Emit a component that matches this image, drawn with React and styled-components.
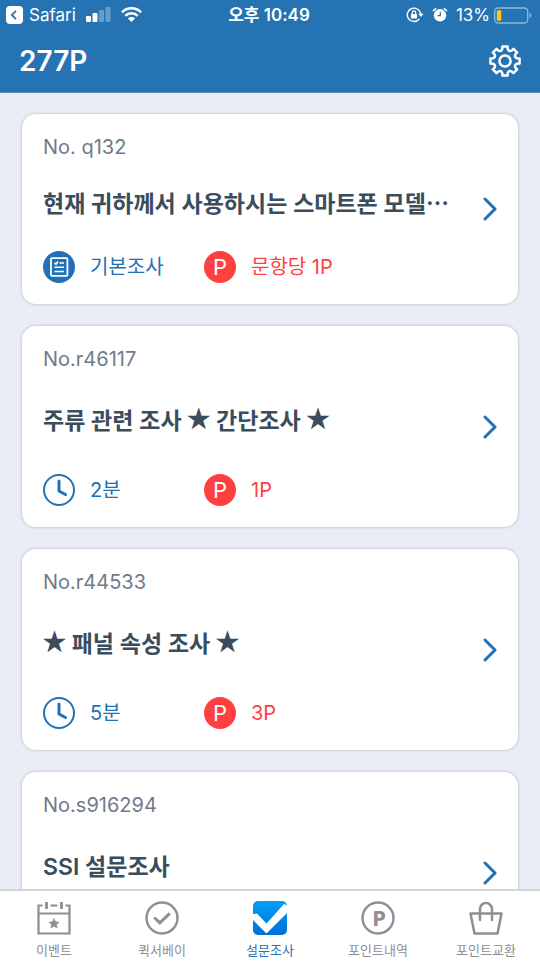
import React from 'react'
import styled, { createGlobalStyle } from 'styled-components'

const GlobalStyle = createGlobalStyle`
*{
  box-sizing:border-box;
}
body{
  margin:0;
  background-color:#e9edf5;
  font-family:Inter, "Noto Sans CJK KR", sans-serif;
}
a{
  color:inherit;
  text-decoration:none;
}
svg{
  display:block;
  flex:none;
}
`
const StylePage = styled.div`
  display:flex;
  flex-direction:column;
  height:100vh;
  overflow:hidden;
`
const StyleHeader = styled.header`
  flex:none;
  background-color:#2673b4;
  border-bottom:1px solid #5d88b0;
  color:#fff;
`
const StyleStatus = styled.div`
  display:grid;
  grid-template-columns:1fr auto 1fr;
  align-items:center;
  height:30px;
  padding:0 8px 0 6px;
  font-size:17px;
  line-height:20px;
`
const StyleStatusSide = styled.div`
  display:flex;
  align-items:center;
  justify-content:${props => props.$end ? 'flex-end' : 'flex-start'};
  gap:${props => props.$end ? '8px' : '10px'};
`
const StyleBack = styled.a`
  display:flex;
  align-items:center;
  gap:6px;
`
const StyleBattery = styled.div`
  display:flex;
  align-items:center;
  gap:4px;
`
const StyleTime = styled.time`
  font-weight:600;
`
const StyleBar = styled.div`
  display:flex;
  align-items:center;
  justify-content:space-between;
  height:62px;
  padding:0 19px;
`
const StylePoint = styled.h1`
  margin:0;
  font-size:28px;
  line-height:32px;
  font-weight:600;
`
const StyleSetting = styled.button`
  padding:0;
  border:0;
  background:none;
  color:#fff;
`
const StyleList = styled.main`
  flex:1;
  min-height:0;
  overflow:hidden;
  display:flex;
  flex-direction:column;
  gap:22px;
  padding:21px 22px 0;
`
const StyleCard = styled.a`
  flex:none;
  display:flex;
  align-items:center;
  justify-content:space-between;
  padding:21px;
  border-radius:14px;
  background-color:#fff;
  box-shadow:0 0 3px rgba(60, 65, 80, 0.35);
`
const StyleNo = styled.div`
  font-size:20px;
  line-height:24px;
  color:#6f7b89;
`
const StyleTitle = styled.h2`
  margin:${props => props.$compact ? '29px 0 31px' : '34px 0 37px'};
  height:32px;
  font-size:23px;
  line-height:32px;
  font-weight:600;
  color:#3b4c5c;
  white-space:nowrap;
`
const StyleMore = styled.span`
  font-family:"Noto Sans CJK KR", sans-serif;
  line-height:1;
`
const StyleStar = styled.span`
  margin:0 -2px;
  font-family:"DejaVu Sans", sans-serif;
  font-size:30px;
  line-height:0;
  font-weight:400;
`
const StyleMeta = styled.div`
  display:grid;
  grid-template-columns:161px auto;
  min-height:32px;
`
const StyleMetaItem = styled.div`
  display:flex;
  align-items:center;
  gap:15px;
  font-size:20px;
  line-height:32px;
  color:${props => props.$red ? '#ff4040' : '#2270b5'};
`
const StylePBadge = styled.span`
  width:32px;
  height:32px;
  border-radius:50%;
  background-color:#ff4040;
  color:#fff;
  font-size:22px;
  text-align:center;
`
const StyleTabs = styled.nav`
  flex:none;
  display:grid;
  grid-template-columns:repeat(5, 1fr);
  height:72px;
  border-top:2px solid #d5d6d9;
  background-color:#fff;
`
const StyleTab = styled.a`
  display:flex;
  flex-direction:column;
  align-items:center;
  gap:5px;
  padding-top:10px;
  font-size:13px;
  line-height:20px;
  color:${props => props.$active ? '#2673b4' : '#8e8e93'};
`

const BackIcon = () => (
  <svg width="17" height="18" viewBox="0 0 17 18">
    <rect width="17" height="18" rx="4" fill="#fff" />
    <path d="M10 4.800 5.800 9l4.200 4.200" fill="none" stroke="#2673b4" strokeWidth="1.800" />
  </svg>
)
const SignalIcon = () => (
  <svg width="25" height="16" viewBox="0 0 25 16" fill="#fff">
    <rect x="0" y="9" width="5" height="6" rx="1" />
    <rect x="6.500" y="6" width="5" height="9" rx="1" />
    <g opacity=".3">
      <rect x="13" y="3" width="5" height="12" rx="1" />
      <rect x="19.500" y="0" width="5" height="15" rx="1" />
    </g>
  </svg>
)
const WifiIcon = () => (
  <svg width="21" height="16" viewBox="0 0 21 16">
    <g fill="none" stroke="#fff" strokeWidth="2.600">
      <path d="M1 5.300a13.300 13.300 0 0 1 19 0" />
      <path d="M4.300 8.900a8.700 8.700 0 0 1 12.400 0" />
    </g>
    <path d="M6.900 11.400a5.100 5.100 0 0 1 7.200 0L10.500 15z" fill="#fff" />
  </svg>
)
const LockIcon = () => (
  <svg width="18" height="16" viewBox="0 0 18 16">
    <path d="M13.400 11.800A6.700 6.700 0 1 1 14.700 7.500" fill="none" stroke="#fff" strokeWidth="1.400" />
    <path d="M12.300 6.800h5.200l-2.600 3.300z" fill="#fff" />
    <rect x="5" y="7" width="6" height="4.500" rx=".6" fill="#fff" />
    <path d="M6.300 7.200V5.600a1.700 1.700 0 0 1 3.400 0v1.600" fill="none" stroke="#fff" strokeWidth="1.200" />
  </svg>
)
const AlarmIcon = () => (
  <svg width="16" height="16" viewBox="0 0 16 16">
    <circle cx="8" cy="8.300" r="6.200" fill="#fff" />
    <path d="M1.400 3.600 3.700 1.700M14.600 3.600l-2.300-1.900" stroke="#fff" strokeWidth="1.500" strokeLinecap="round" />
    <path d="M8.300 4.800v3.900H5.500" fill="none" stroke="#2673b4" strokeWidth="1.200" />
  </svg>
)
const BatteryIcon = () => (
  <svg width="38" height="17" viewBox="0 0 38 17">
    <rect x=".7" y="1" width="33" height="15" rx="3.500" fill="none" stroke="#8fb8dc" strokeWidth="1.300" />
    <path d="M35.500 6v5q2-.6 2-2.500t-2-2.500z" fill="#8fb8dc" />
    <rect x="2.800" y="3.200" width="4.500" height="10.600" rx="1" fill="#fccb0a" />
  </svg>
)

// 톱니 8개
const gearPath = () => {
  const point = (deg, r) => {
    const rad = deg * Math.PI / 180
    return `${(16 + r * Math.cos(rad)).toFixed(2)} ${(16 + r * Math.sin(rad)).toFixed(2)}`
  }
  let d = ''
  for (let i = 0; i < 8; i++) {
    const a = i * 45 - 90
    d += `${i ? 'L' : 'M'}${point(a - 10, 14.8)}L${point(a + 10, 14.8)}L${point(a + 13, 12.2)}`
    d += `Q${point(a + 22.5, 10)} ${point(a + 32, 12.2)}`
  }
  return d + 'Z'
}
const GearIcon = () => (
  <svg width="32" height="32" viewBox="0 0 32 32" fill="none" stroke="currentColor" strokeWidth="2.500" strokeLinejoin="round">
    <path d={gearPath()} />
    <circle cx="16" cy="16" r="5.600" />
  </svg>
)
const ChevronIcon = () => (
  <svg width="14" height="24" viewBox="0 0 14 24">
    <path d="M2 2 12 12 2 22" fill="none" stroke="#2270b5" strokeWidth="3" strokeLinecap="round" strokeLinejoin="round" />
  </svg>
)
const ClockIcon = () => (
  <svg width="32" height="32" viewBox="0 0 32 32" fill="none" stroke="#2270b5">
    <circle cx="16" cy="16" r="15" strokeWidth="2" />
    <path d="M16 7v10l6.500 3.500" strokeWidth="3" strokeLinecap="round" strokeLinejoin="round" />
  </svg>
)
const SheetIcon = () => (
  <svg width="32" height="32" viewBox="0 0 32 32" fill="none" stroke="#fff">
    <circle cx="16" cy="16" r="16" fill="#2270b5" stroke="none" />
    <rect x="8" y="7.200" width="16.400" height="17.600" rx="1" strokeWidth="1.800" />
    <path d="M11.500 11.700l1.500 1.500 2-2.700M16.500 12h4.500M11.500 16.300h9.500M11.500 20.500h9.500" strokeWidth="1.600" />
  </svg>
)
const EventIcon = () => (
  <svg width="34" height="34" viewBox="0 0 34 34" fill="none" stroke="#8e8e93" strokeWidth="2.200">
    <path d="M5.500 4.500H1.500v28h31v-28h-4M1.500 12.500h31M13.500 4.500h7" />
    <path d="M9.500 1v7M24.500 1v7" strokeWidth="2.800" />
    <path d="m17 16.800 1.700 3.700 4 .4-3 2.700.9 4-3.600-2.100-3.600 2.100.9-4-3-2.700 4-.4z" fill="#8e8e93" stroke="none" />
  </svg>
)
const QuickIcon = () => (
  <svg width="34" height="34" viewBox="0 0 34 34" fill="none" stroke="#8e8e93">
    <circle cx="17" cy="17" r="15.500" strokeWidth="2.400" />
    <path d="m9.300 16.500 5.500 5.300 10-9.500" strokeWidth="3" />
  </svg>
)
const SurveyIcon = () => (
  <svg width="34" height="34" viewBox="0 0 34 34">
    <defs>
      <linearGradient id="survey" x1="0" y1="0" x2="0" y2="1">
        <stop offset="0" stopColor="#00a0f8" />
        <stop offset="1" stopColor="#006fd6" />
      </linearGradient>
    </defs>
    <rect width="34" height="34" rx="5" fill="url(#survey)" />
    <path d="M0 13 4 12.500 13.500 22.500 31 3 34 4.500V12L13.500 32.500 0 19z" fill="#fff" />
  </svg>
)
const PointIcon = () => (
  <svg width="34" height="34" viewBox="0 0 34 34">
    <circle cx="17" cy="17" r="15.500" fill="none" stroke="#8e8e93" strokeWidth="2.400" />
    <text x="18" y="25" textAnchor="middle" fontFamily="Noto Sans, sans-serif" fontSize="22" fontWeight="700" fill="#8e8e93">P</text>
  </svg>
)
const BagIcon = () => (
  <svg width="34" height="34" viewBox="0 0 34 34" fill="none" stroke="#8e8e93" strokeWidth="2.500" strokeLinejoin="round">
    <path d="M1.500 12.500h31L28.500 32.500h-23z" />
    <path d="M11 19V8a6 6 0 0 1 12 0v11" strokeLinecap="round" />
  </svg>
)

const surveys = [
  { no: 'No. q132', title: '현재 귀하께서 사용하시는 스마트폰 모델…', basic: true, type: '기본조사', point: '문항당 1P' },
  { no: 'No.r46117', title: '주류 관련 조사 ★ 간단조사 ★', type: '2분', point: '1P' },
  { no: 'No.r44533', title: '★ 패널 속성 조사 ★', type: '5분', point: '3P' },
  { no: 'No.s916294', title: 'SSI 설문조사' },
]

const tabs = [
  { name: '이벤트', icon: <EventIcon /> },
  { name: '퀵서베이', icon: <QuickIcon /> },
  { name: '설문조사', icon: <SurveyIcon />, active: true },
  { name: '포인트내역', icon: <PointIcon /> },
  { name: '포인트교환', icon: <BagIcon /> },
]

// ★ 와 … 는 다른 글꼴로 표시
const renderTitle = title => title.split(/(★|…)/).map((part, index) => {
  if (part === '★') return <StyleStar key={index}>{part}</StyleStar>
  if (part === '…') return <StyleMore key={index}>{part}</StyleMore>
  return part
})

const Header = () => (
  <StyleHeader>
    <StyleStatus>
      <StyleStatusSide>
        <StyleBack href="#"><BackIcon />Safari</StyleBack>
        <SignalIcon />
        <WifiIcon />
      </StyleStatusSide>
      <StyleTime>오후 10:49</StyleTime>
      <StyleStatusSide $end>
        <LockIcon />
        <AlarmIcon />
        <StyleBattery>13%<BatteryIcon /></StyleBattery>
      </StyleStatusSide>
    </StyleStatus>
    <StyleBar>
      <StylePoint>277P</StylePoint>
      <StyleSetting type="button" aria-label="설정"><GearIcon /></StyleSetting>
    </StyleBar>
  </StyleHeader>
)

const SurveyCard = ({ survey }) => (
  <StyleCard href="#">
    <div>
      <StyleNo>{survey.no}</StyleNo>
      <StyleTitle $compact={survey.basic}>{renderTitle(survey.title)}</StyleTitle>
      <StyleMeta>
        {survey.type && <StyleMetaItem>
          {survey.basic ? <SheetIcon /> : <ClockIcon />}
          {survey.type}
        </StyleMetaItem>}
        {survey.point && <StyleMetaItem $red>
          <StylePBadge>P</StylePBadge>
          {survey.point}
        </StyleMetaItem>}
      </StyleMeta>
    </div>
    <ChevronIcon />
  </StyleCard>
)

const App = () => {
  return (
    <>
      <GlobalStyle />
      <StylePage>
        <Header />
        <StyleList>
          {surveys.map(survey => <SurveyCard key={survey.no} survey={survey} />)}
        </StyleList>
        <StyleTabs>
          {tabs.map(tab => (
            <StyleTab key={tab.name} href="#" $active={tab.active}>
              {tab.icon}
              {tab.name}
            </StyleTab>
          ))}
        </StyleTabs>
      </StylePage>
    </>
  )
}

export default App
